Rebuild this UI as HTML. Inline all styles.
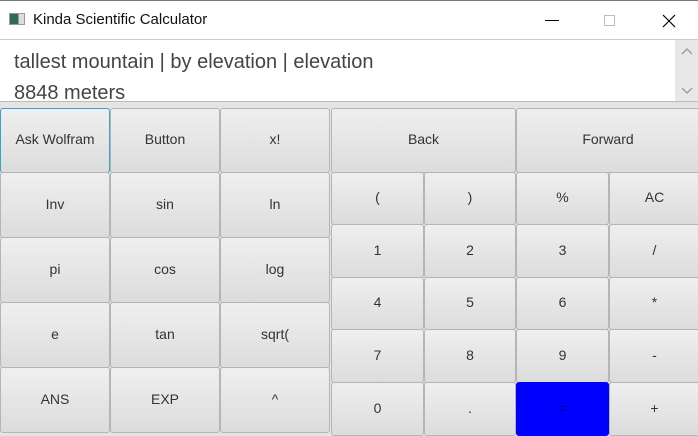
<!DOCTYPE html>
<html><head><style>
*{margin:0;padding:0;box-sizing:border-box}
body{width:698px;height:427px;overflow:hidden;background:#e4e4e4;font-family:"Segoe UI","Liberation Sans",sans-serif;position:relative}
.title{position:absolute;left:0;top:0;width:698px;height:40px;background:#fff;border-top:1px solid #777;border-bottom:1px solid #ccc}
.title span{position:absolute;left:33px;top:10px;font-size:15px;color:#111}
.ico{position:absolute;left:9px;top:12px;width:16px;height:12px;border:1px solid #999;background:linear-gradient(90deg,#2e6b5a 0 60%,#ddd 60%)}
.ta{position:absolute;left:0;top:40px;width:698px;height:62px;background:#fff;border-bottom:1px solid #bbb;overflow:hidden}
.ta .t{position:absolute;left:14px;font-size:20px;color:#444;white-space:nowrap}
.sb{position:absolute;right:0;top:0;width:23px;height:62px;background:#e8e8e8}
.b{position:absolute;border:1px solid #b5b5b5;border-radius:3px;background:linear-gradient(#efefef,#dcdcdc);font-size:14px;color:#333;display:flex;align-items:center;justify-content:center;padding-bottom:3px}
</style></head><body>
<div class="title"><div class="ico"></div><span>Kinda Scientific Calculator</span>
<div style="position:absolute;left:545px;top:19px;width:14px;height:1px;background:#000"></div>
<div style="position:absolute;left:604px;top:14px;width:11px;height:11px;border:1px solid #bbb"></div>
<svg style="position:absolute;left:662px;top:13px" width="14" height="14"><path d="M1 1L13 13M13 1L1 13" stroke="#000" stroke-width="1.2"/></svg>
</div>
<div class="ta"><div class="t" style="top:11px">tallest mountain | by elevation | elevation</div><div class="t" style="top:42px">8848 meters</div>
<div class="sb"><svg width="23" height="62"><path d="M7 14L12 9L17 14M7 48L12 53L17 48" stroke="#999" fill="none" stroke-width="1.3"/></svg></div></div>

<div class="b" style="left:0;top:108px;width:110px;height:65px;border-color:#3aa0d0">Ask Wolfram</div>
<div class="b" style="left:110px;top:108px;width:110px;height:65px">Button</div>
<div class="b" style="left:220px;top:108px;width:110px;height:65px">x!</div>
<div class="b" style="left:0;top:172px;width:110px;height:66px">Inv</div>
<div class="b" style="left:110px;top:172px;width:110px;height:66px">sin</div>
<div class="b" style="left:220px;top:172px;width:110px;height:66px">ln</div>
<div class="b" style="left:0;top:237px;width:110px;height:66px">pi</div>
<div class="b" style="left:110px;top:237px;width:110px;height:66px">cos</div>
<div class="b" style="left:220px;top:237px;width:110px;height:66px">log</div>
<div class="b" style="left:0;top:302px;width:110px;height:66px">e</div>
<div class="b" style="left:110px;top:302px;width:110px;height:66px">tan</div>
<div class="b" style="left:220px;top:302px;width:110px;height:66px">sqrt(</div>
<div class="b" style="left:0;top:367px;width:110px;height:66px">ANS</div>
<div class="b" style="left:110px;top:367px;width:110px;height:66px">EXP</div>
<div class="b" style="left:220px;top:367px;width:110px;height:66px">^</div>

<div class="b" style="left:331px;top:108px;width:185px;height:65px">Back</div>
<div class="b" style="left:516px;top:108px;width:184px;height:65px">Forward</div>

<div class="b" style="left:331px;top:172px;width:93px;height:53px">(</div>
<div class="b" style="left:424px;top:172px;width:92px;height:53px">)</div>
<div class="b" style="left:516px;top:172px;width:93px;height:53px">%</div>
<div class="b" style="left:609px;top:172px;width:91px;height:53px">AC</div>
<div class="b" style="left:331px;top:224px;width:93px;height:54px">1</div>
<div class="b" style="left:424px;top:224px;width:92px;height:54px">2</div>
<div class="b" style="left:516px;top:224px;width:93px;height:54px">3</div>
<div class="b" style="left:609px;top:224px;width:91px;height:54px">/</div>
<div class="b" style="left:331px;top:277px;width:93px;height:53px">4</div>
<div class="b" style="left:424px;top:277px;width:92px;height:53px">5</div>
<div class="b" style="left:516px;top:277px;width:93px;height:53px">6</div>
<div class="b" style="left:609px;top:277px;width:91px;height:53px">*</div>
<div class="b" style="left:331px;top:329px;width:93px;height:54px">7</div>
<div class="b" style="left:424px;top:329px;width:92px;height:54px">8</div>
<div class="b" style="left:516px;top:329px;width:93px;height:54px">9</div>
<div class="b" style="left:609px;top:329px;width:91px;height:54px">-</div>
<div class="b" style="left:331px;top:382px;width:93px;height:54px">0</div>
<div class="b" style="left:424px;top:382px;width:92px;height:54px">.</div>
<div class="b" style="left:516px;top:382px;width:93px;height:54px;background:#0000ff;border-color:#0000ff;color:#000088">=</div>
<div class="b" style="left:609px;top:382px;width:91px;height:54px">+</div>
</body></html>
